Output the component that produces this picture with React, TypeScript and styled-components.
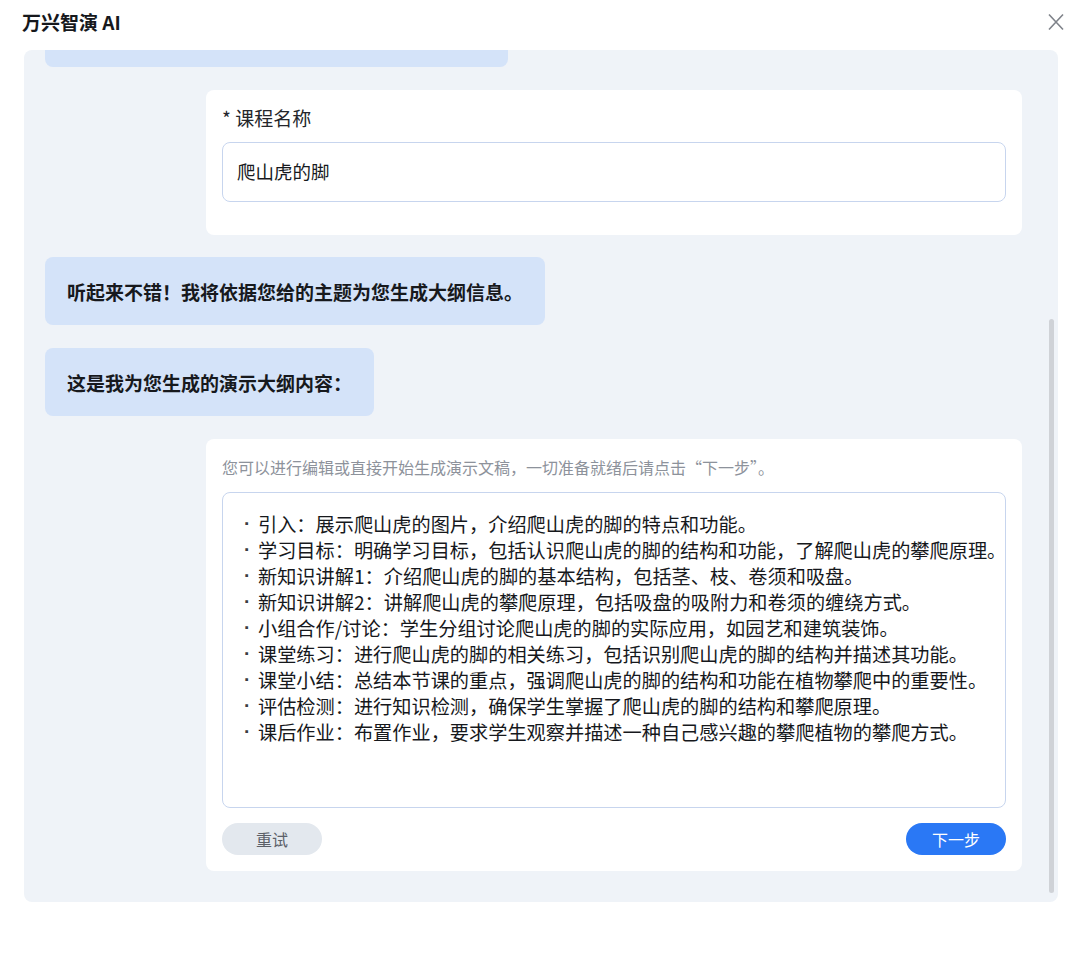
import styled, { createGlobalStyle } from 'styled-components';
import { ReactElement } from 'react';

const GlobalStyle = createGlobalStyle`
  html, body {
    margin: 0;
    padding: 0;
    background: #ffffff;
    font-family: "Noto Sans CJK SC", "Noto Sans", sans-serif;
    color: #1d1f23;
  }
`

const outline = [
  '引入：展示爬山虎的图片，介绍爬山虎的脚的特点和功能。',
  '学习目标：明确学习目标，包括认识爬山虎的脚的结构和功能，了解爬山虎的攀爬原理。',
  '新知识讲解1：介绍爬山虎的脚的基本结构，包括茎、枝、卷须和吸盘。',
  '新知识讲解2：讲解爬山虎的攀爬原理，包括吸盘的吸附力和卷须的缠绕方式。',
  '小组合作/讨论：学生分组讨论爬山虎的脚的实际应用，如园艺和建筑装饰。',
  '课堂练习：进行爬山虎的脚的相关练习，包括识别爬山虎的脚的结构并描述其功能。',
  '课堂小结：总结本节课的重点，强调爬山虎的脚的结构和功能在植物攀爬中的重要性。',
  '评估检测：进行知识检测，确保学生掌握了爬山虎的脚的结构和攀爬原理。',
  '课后作业：布置作业，要求学生观察并描述一种自己感兴趣的攀爬植物的攀爬方式。',
]

const Page = styled.div`
  width: 1080px;
  height: 953px;
  box-sizing: border-box;
  padding: 0 22px 0 24px;
`

const Header = styled.div`
  height: 50px;
  display: flex;
  align-items: flex-start;
  justify-content: space-between;
  margin-left: -2px;
`

const Title = styled.div`
  font-size: 19px;
  font-weight: 700;
  line-height: 24px;
  padding-top: 10px;
  color: #16181c;
`

const CloseButton = styled.button`
  border: none;
  background: none;
  padding: 0;
  margin-top: 13px;
  margin-right: -8px;
  width: 20px;
  height: 18px;
  display: flex;
  align-items: center;
  justify-content: center;
  cursor: pointer;
`

const Panel = styled.div`
  position: relative;
  height: 852px;
  background: #eff3f8;
  border-radius: 8px;
  overflow: hidden;
`

const Thread = styled.div`
  display: flex;
  flex-direction: column;
  align-items: flex-start;
  gap: 22px;
  padding: 0 36px 0 21px;
`

const Bubble = styled.div<{ $cut?: number }>`
  box-sizing: border-box;
  height: 68px;
  display: flex;
  align-items: center;
  padding: 0 22px;
  margin-top: ${p => (p.$cut ? `-${p.$cut}px` : '0')};
  margin-bottom: 1px;
  background: #d4e3f9;
  border-radius: 8px;
  font-size: 19px;
  font-weight: 700;
  color: #17191d;
  white-space: nowrap;
`

const Card = styled.div<{ $pad: string }>`
  box-sizing: border-box;
  align-self: flex-end;
  width: 816px;
  background: #ffffff;
  border-radius: 8px;
  padding: ${p => p.$pad};
`

const Label = styled.div`
  font-size: 19px;
  line-height: 26px;
  color: #24262b;
  margin-bottom: 11px;
`

const NameInput = styled.div`
  box-sizing: border-box;
  height: 60px;
  border: 1px solid #c7d5ee;
  border-radius: 8px;
  display: flex;
  align-items: center;
  padding: 0 14px 2px;
  font-size: 18.5px;
  color: #17191d;
`

const Hint = styled.div`
  font-size: 16px;
  line-height: 22px;
  color: #8d929b;
  margin-bottom: 14px;
`

const OutlineBox = styled.div`
  box-sizing: border-box;
  height: 316px;
  border: 1px solid #c7d5ee;
  border-radius: 8px;
  padding: 18px 20px;
`

const OutlineLine = styled.div`
  display: flex;
  font-size: 19.2px;
  line-height: 26px;
  color: #16181c;
  white-space: nowrap;
`

const Dot = styled.span`
  width: 15px;
  flex: none;
  padding-left: 1px;
  box-sizing: border-box;
  font-family: "Liberation Sans", sans-serif;
  font-weight: 700;
  color: #3a3d42;
`

const Actions = styled.div`
  display: flex;
  justify-content: space-between;
  margin-top: 15px;
`

const PillButton = styled.button<{ $primary?: boolean }>`
  width: 100px;
  height: 32px;
  border: none;
  border-radius: 16px;
  font-family: inherit;
  font-size: 16px;
  background: ${p => (p.$primary ? '#2a78f5' : '#e3e8ee')};
  color: ${p => (p.$primary ? '#ffffff' : '#5b6068')};
  cursor: pointer;
`

const ScrollThumb = styled.div`
  position: absolute;
  right: 4px;
  top: 269px;
  width: 5px;
  height: 574px;
  border-radius: 3px;
  background: #cfd2d7;
`

export default function App(): ReactElement {
  return (
    <>
      <GlobalStyle />
      <Page>
        <Header>
          <Title>万兴智演 AI</Title>
          <CloseButton aria-label="关闭">
            <svg width="18" height="18" viewBox="0 0 18 18">
              <path d="M2 1.5 L16 16.5 M16 1.5 L2 16.5" stroke="#7f838a" strokeWidth="1.6" fill="none" />
            </svg>
          </CloseButton>
        </Header>

        <Panel>
          <Thread>
            <Bubble $cut={51} style={{ width: 463 }} />

            <Card $pad="15px 16px 33px">
              <Label>* 课程名称</Label>
              <NameInput>爬山虎的脚</NameInput>
            </Card>

            <Bubble>听起来不错！我将依据您给的主题为您生成大纲信息。</Bubble>
            <Bubble>这是我为您生成的演示大纲内容：</Bubble>

            <Card $pad="17px 16px 16px">
              <Hint>您可以进行编辑或直接开始生成演示文稿，一切准备就绪后请点击“下一步”。</Hint>
              <OutlineBox>
                {outline.map((line, i) => (
                  <OutlineLine key={i}>
                    <Dot>·</Dot>
                    {line}
                  </OutlineLine>
                ))}
              </OutlineBox>
              <Actions>
                <PillButton>重试</PillButton>
                <PillButton $primary>下一步</PillButton>
              </Actions>
            </Card>
          </Thread>
          <ScrollThumb />
        </Panel>
      </Page>
    </>
  )
}
